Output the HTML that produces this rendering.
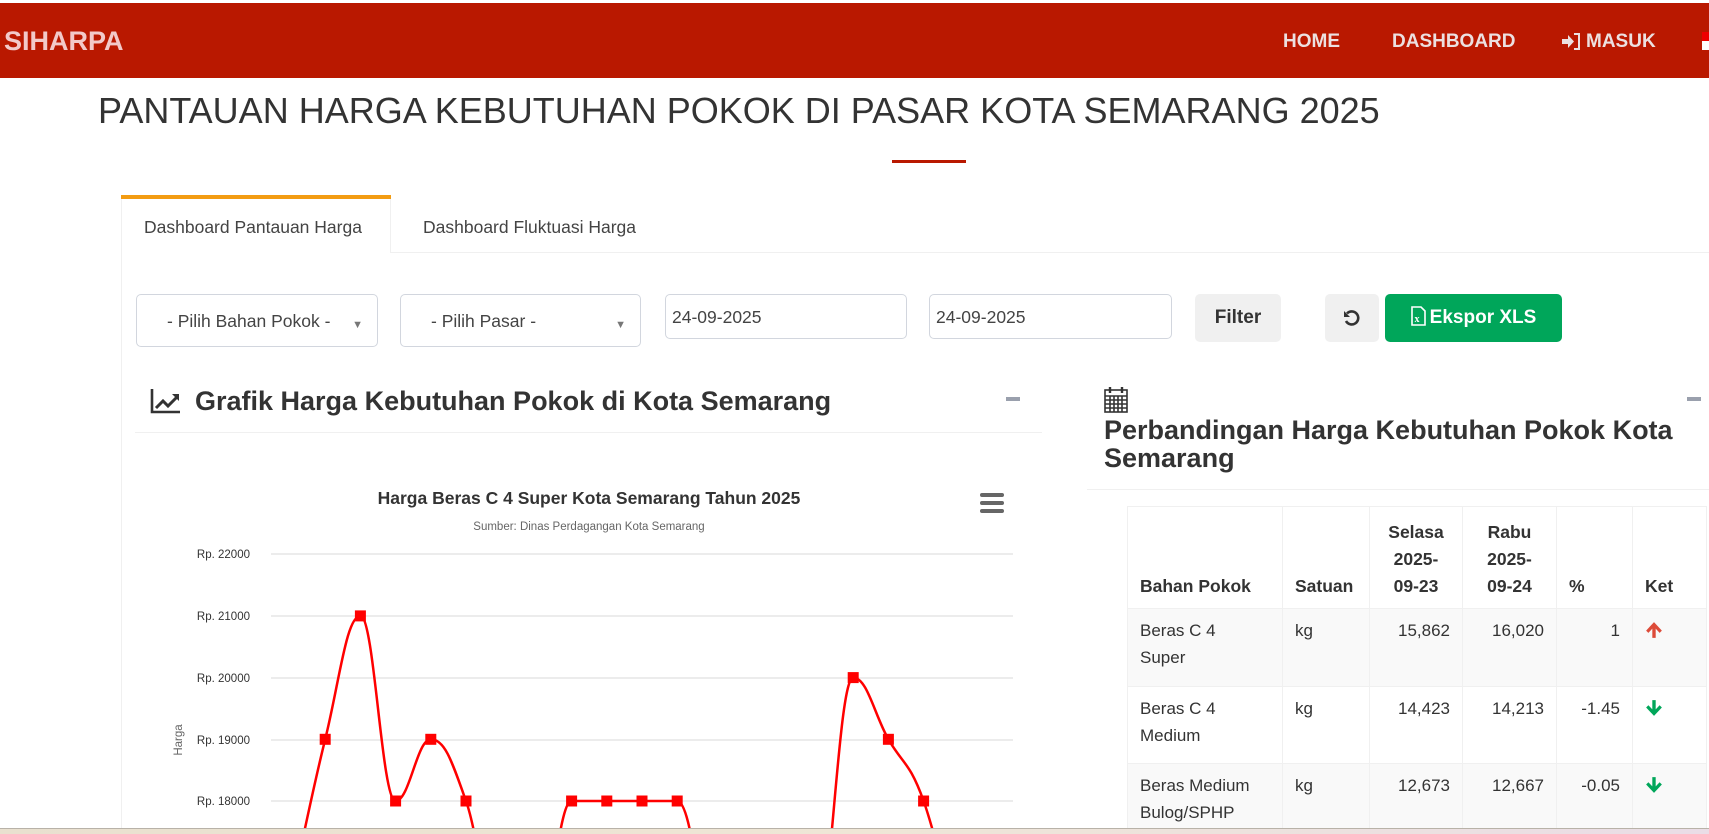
<!DOCTYPE html>
<html><head><meta charset="utf-8"><style>
*{box-sizing:border-box;margin:0;padding:0}
html,body{width:1709px;height:834px;overflow:hidden}
body{background:#fff;font-family:"Liberation Sans",Arial,sans-serif;color:#333;position:relative}
.a{position:absolute}
.nav{left:0;top:3px;width:1709px;height:75px;background:#b91800}
.nl{color:#ece0e0;font-weight:bold;font-size:19px;top:31px}
.sel{border:1px solid #d2d6de;border-radius:5px;height:53px;top:294px;font-size:17.5px;color:#444}
.sel span{position:absolute;top:16px}
.sel i{position:absolute;right:14px;top:24px;font-style:normal;font-size:11px;color:#777}
.inp{border:1px solid #d2d6de;border-radius:5px;height:45px;top:294px;font-size:17.5px;color:#444;padding:12px 6px}
.btn{top:294px;height:48px;border-radius:5px;background:#f0f0f0;font-weight:bold;font-size:19px;text-align:center;line-height:48px;color:#333}
h3{position:absolute;font-size:27px;font-weight:bold;color:#333;line-height:28px}
.mn{width:14px;height:4px;background:#9aa0ad}
table{border-collapse:collapse;font-size:17px;line-height:27px}
td,th{border:1px solid #f0f0f0;padding:8px 12px;vertical-align:top}
th{vertical-align:bottom;text-align:left;font-size:17.5px}
.r{text-align:right}
</style></head><body>
<div class="a nav"></div>
<div class="a" style="left:4px;top:26px;color:#f2c9c9;font-weight:bold;font-size:27px">SIHARPA</div>
<div class="a nl" style="left:1283px">HOME</div>
<div class="a nl" style="left:1392px">DASHBOARD</div>
<svg class="a" style="left:1562px;top:33px" width="19" height="17" viewBox="0 0 19 17"><path d="M0 6h6V2l6 6.5-6 6.5v-4H0z" fill="#ece0e0"/><path d="M12 1h5v15h-5" fill="none" stroke="#ece0e0" stroke-width="2"/></svg>
<div class="a nl" style="left:1586px">MASUK</div>
<div class="a" style="left:1702px;top:32px;width:7px;height:9px;background:#e00"></div>
<div class="a" style="left:1702px;top:41px;width:7px;height:9px;background:#fff"></div>

<div class="a" style="left:98px;top:90px;font-size:36px;color:#333">PANTAUAN HARGA KEBUTUHAN POKOK DI PASAR KOTA SEMARANG 2025</div>
<div class="a" style="left:892px;top:160px;width:74px;height:3px;background:#b91800"></div>

<div class="a" style="left:121px;top:195px;width:270px;height:4px;background:#f39c12"></div>
<div class="a" style="left:121px;top:199px;width:1px;height:640px;background:#f0f0f0"></div>
<div class="a" style="left:390px;top:199px;width:1px;height:54px;background:#f0f0f0"></div>
<div class="a" style="left:390px;top:252px;width:1319px;height:1px;background:#f0f0f0"></div>
<div class="a" style="left:144px;top:217px;font-size:17.5px;color:#444">Dashboard Pantauan Harga</div>
<div class="a" style="left:423px;top:217px;font-size:17.5px;color:#444">Dashboard Fluktuasi Harga</div>

<div class="a sel" style="left:136px;width:242px"><span style="left:30px">- Pilih Bahan Pokok -</span><i>▼</i></div>
<div class="a sel" style="left:400px;width:241px"><span style="left:30px">- Pilih Pasar -</span><i>▼</i></div>
<div class="a inp" style="left:665px;width:242px">24-09-2025</div>
<div class="a inp" style="left:929px;width:243px">24-09-2025</div>
<div class="a btn" style="left:1195px;width:86px">Filter</div>
<div class="a btn" style="left:1325px;width:54px"><svg width="20" height="20" viewBox="0 0 20 20" style="vertical-align:middle"><path d="M5 5.5A6.5 6.5 0 1 1 4 13" fill="none" stroke="#333" stroke-width="2.6"/><path d="M2 3v6h6z" fill="#333"/></svg></div>
<div class="a btn" style="left:1385px;width:177px;background:#00a65a;color:#fff"><svg width="15" height="20" viewBox="0 0 15 20" style="vertical-align:-3px;margin-right:4px"><path d="M1 1h9l4 4v14H1z" fill="none" stroke="#fff" stroke-width="1.6"/><text x="3.5" y="16" font-size="10" fill="#fff" font-family="Liberation Serif">x</text></svg>Ekspor XLS</div>

<svg class="a" style="left:150px;top:388px" width="31" height="27" viewBox="0 0 31 27"><path d="M2 1v23h28" fill="none" stroke="#333" stroke-width="2.6"/><path d="M6 20l7-7 5 5 9-9" fill="none" stroke="#333" stroke-width="3"/><path d="M22 6h7v7z" fill="#333"/></svg>
<h3 style="left:195px;top:387px">Grafik Harga Kebutuhan Pokok di Kota Semarang</h3>
<div class="a mn" style="left:1006px;top:397px"></div>
<div class="a" style="left:135px;top:432px;width:907px;height:1px;background:#f0f0f0"></div>

<svg class="a" style="left:140px;top:470px" width="920" height="364">
<g font-family="Liberation Sans,DejaVu Sans,sans-serif">
<text x="449" y="34" text-anchor="middle" font-size="17.5" font-weight="bold" fill="#333">Harga Beras C 4 Super Kota Semarang Tahun 2025</text>
<text x="449" y="60" text-anchor="middle" font-size="11.5" fill="#666">Sumber: Dinas Perdagangan Kota Semarang</text>
<g fill="#666"><rect x="840" y="23" width="24" height="4" rx="2"/><rect x="840" y="31" width="24" height="4" rx="2"/><rect x="840" y="39" width="24" height="4" rx="2"/></g>
<g stroke="#e6e6e6" stroke-width="1.5"><line x1="131" x2="873" y1="84" y2="84"/><line x1="131" x2="873" y1="146" y2="146"/><line x1="131" x2="873" y1="208" y2="208"/><line x1="131" x2="873" y1="270" y2="270"/><line x1="131" x2="873" y1="331" y2="331"/></g>
<g font-size="11.5" fill="#333" text-anchor="end"><text x="110" y="88">Rp. 22000</text><text x="110" y="150">Rp. 21000</text><text x="110" y="212">Rp. 20000</text><text x="110" y="274">Rp. 19000</text><text x="110" y="335">Rp. 18000</text></g>
<text transform="translate(42,270) rotate(-90)" text-anchor="middle" font-size="11.5" fill="#666">Harga</text>
<path id="ln" fill="none" stroke="#f00" stroke-width="2.5"/>
<g id="pts" fill="#f00"></g>
</g></svg>

<svg class="a" style="left:1104px;top:386px" width="24" height="27" viewBox="0 0 24 27"><g fill="none" stroke="#333" stroke-width="1.6"><rect x="1" y="4" width="22" height="22"/><path d="M1 10h22M1 14h22M1 18h22M1 22h22M6 10v16M10 10v16M14 10v16M18 10v16"/><path d="M6 1v6M18 1v6" stroke-width="2.4"/></g></svg>
<h3 style="left:1104px;top:416px">Perbandingan Harga Kebutuhan Pokok Kota<br>Semarang</h3>
<div class="a mn" style="left:1687px;top:397px"></div>
<div class="a" style="left:1087px;top:489px;width:622px;height:1px;background:#f0f0f0"></div>

<div class="a" style="left:1127px;top:506px;width:582px;height:322px;overflow:hidden">
<table style="width:580px">
<tr style="height:102px"><th style="width:155px">Bahan Pokok</th><th style="width:87px">Satuan</th><th style="width:93px;text-align:center">Selasa<br>2025-<br>09-23</th><th style="width:94px;text-align:center">Rabu<br>2025-<br>09-24</th><th style="width:76px">%</th><th>Ket</th></tr>
<tr style="background:#f9f9f9;height:78px"><td>Beras C 4<br>Super</td><td>kg</td><td class="r">15,862</td><td class="r">16,020</td><td class="r">1</td><td><svg width="18" height="18" viewBox="0 0 16 16" style="vertical-align:-3px"><path d="M8 1L1 8.5l2 2 3.5-3.7V15h3V6.8l3.5 3.7 2-2z" fill="#dd4b39"/></svg></td></tr>
<tr style="height:77px"><td>Beras C 4<br>Medium</td><td>kg</td><td class="r">14,423</td><td class="r">14,213</td><td class="r">-1.45</td><td><svg width="18" height="18" viewBox="0 0 16 16" style="vertical-align:-3px"><path d="M8 15L1 7.5l2-2 3.5 3.7V1h3v8.2l3.5-3.7 2 2z" fill="#00a65a"/></svg></td></tr>
<tr style="background:#f9f9f9"><td>Beras Medium<br>Bulog/SPHP</td><td>kg</td><td class="r">12,673</td><td class="r">12,667</td><td class="r">-0.05</td><td><svg width="18" height="18" viewBox="0 0 16 16" style="vertical-align:-3px"><path d="M8 15L1 7.5l2-2 3.5 3.7V1h3v8.2l3.5-3.7 2 2z" fill="#00a65a"/></svg></td></tr>
</table></div>

<div class="a" style="left:0;top:828px;width:1709px;height:6px;background:linear-gradient(90deg,#e9e0cf,#efe6d6 50%,#eadde6);border-top:1px solid #b8b2a8"></div>

<script>
var vals=[16400,19000,21000,18000,19000,18000,15800,15800,18000,18000,18000,18000,15800,15000,15000,15800,20000,19000,18000,15800];
var X=[],Y=[];
for(var i=0;i<vals.length;i++){X.push(150+35.2*i);Y.push(331-(vals[i]-18000)*0.0617);}
var n=X.length,L=[],R=[];
for(var i=0;i<n;i++){
 if(i==0||i==n-1){L.push([X[i],Y[i]]);R.push([X[i],Y[i]]);continue;}
 var s=1.5,d=2.5;
 var lx=(s*X[i]+X[i-1])/d,ly=(s*Y[i]+Y[i-1])/d,rx=(s*X[i]+X[i+1])/d,ry=(s*Y[i]+Y[i+1])/d;
 var c=Y[i]-(ly+(ry-ly)*(X[i]-lx)/(rx-lx));ly+=c;ry+=c;
 if(ly>Y[i-1]&&ly>Y[i]){ly=Math.max(Y[i-1],Y[i]);ry=2*Y[i]-ly;}
 else if(ly<Y[i-1]&&ly<Y[i]){ly=Math.min(Y[i-1],Y[i]);ry=2*Y[i]-ly;}
 if(ry>Y[i+1]&&ry>Y[i]){ry=Math.max(Y[i+1],Y[i]);ly=2*Y[i]-ry;}
 else if(ry<Y[i+1]&&ry<Y[i]){ry=Math.min(Y[i+1],Y[i]);ly=2*Y[i]-ry;}
 L.push([lx,ly]);R.push([rx,ry]);}
var d="M"+X[0]+" "+Y[0];
for(var i=0;i<n-1;i++)d+=" C"+R[i][0]+" "+R[i][1]+" "+L[i+1][0]+" "+L[i+1][1]+" "+X[i+1]+" "+Y[i+1];
document.getElementById("ln").setAttribute("d",d);
var g="";for(var i=0;i<n;i++)g+='<rect x="'+(X[i]-5.5)+'" y="'+(Y[i]-5.5)+'" width="11" height="11"/>';
document.getElementById("pts").innerHTML=g;
</script>
</body></html>
